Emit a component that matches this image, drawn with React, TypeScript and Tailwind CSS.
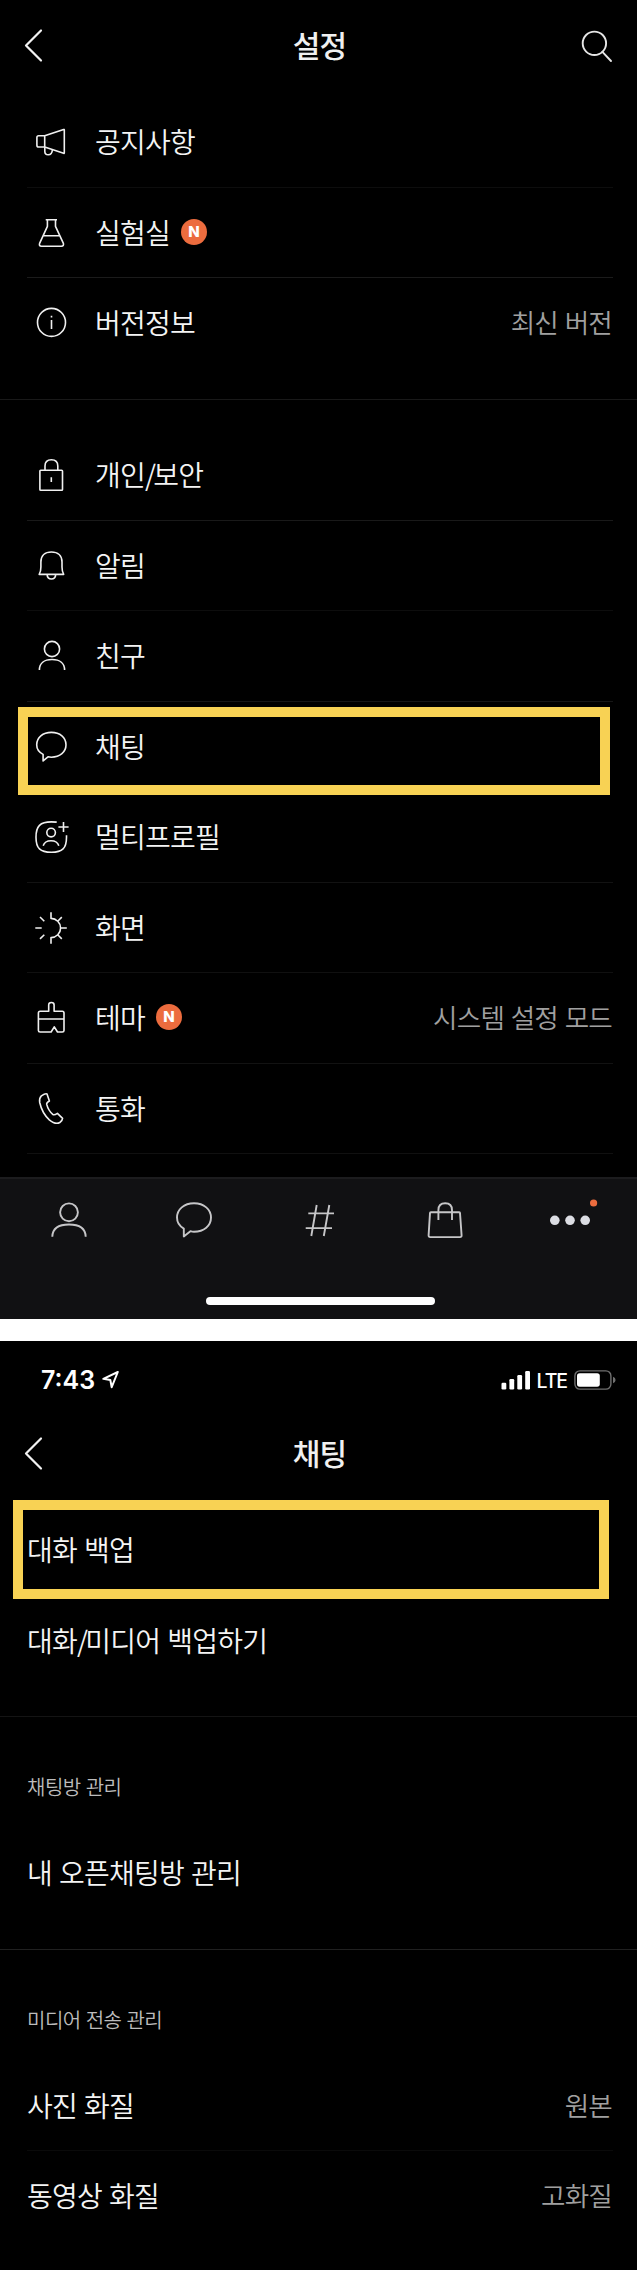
import { Fragment, type ReactNode } from "react";

function Icon({ children }: { children: ReactNode }) {
  return (
    <svg
      className="h-9 w-9 shrink-0"
      viewBox="0 0 36 36"
      fill="none"
      stroke="#f0f0f0"
      strokeWidth="1.6"
      strokeLinejoin="round"
    >
      {children}
    </svg>
  );
}

const icons = {
  notice: (
    <Icon>
      <path d="M11.7 11.8H5.6Q3.9 11.8 3.9 13.6V21.2Q3.9 23 5.6 23H11.7ZM11.7 11.8 30.6 5.5Q31.3 5.3 31.3 6V28.8Q31.3 29.6 30.6 29.3L11.7 23" />
      <path d="M11.8 23V27.2C11.8 29.6 13 30.8 15.2 30.8C17.8 30.8 19.2 29.2 19.4 25.8" />
    </Icon>
  ),
  lab: (
    <Icon>
      <path d="M12.7 4.8H24M14.4 4.8V11.3L6.6 28.4Q5.8 31.2 8.4 31.2H28.4Q31 31.2 30.4 28.4L22.5 11.3V4.8M10.3 20.7H26.8" />
    </Icon>
  ),
  info: (
    <Icon>
      <circle cx="18.5" cy="17.4" r="14" />
      <path d="M18.5 15V24M18.5 10.8V12.6" />
    </Icon>
  ),
  lock: (
    <Icon>
      <rect x="6.9" y="13.2" width="22.6" height="20" rx="0.8" />
      <path d="M12 13V9C12 4.8 14.5 2.7 18.4 2.7C22.3 2.7 24.8 4.8 24.8 9V13M18.3 20.3V25" />
    </Icon>
  ),
  bell: (
    <Icon>
      <path d="M6.2 26.4C7.4 24.5 7.9 22 7.9 19V14C7.9 7.6 12 4 18.4 4C24.8 4 29 7.6 29 14V19C29 22 29.5 24.5 30.7 26.4ZM14.1 26.6C14.3 29.6 15.9 31 18.4 31C20.9 31 22.5 29.6 22.7 26.6" />
    </Icon>
  ),
  friend: (
    <Icon>
      <circle cx="19" cy="11" r="7.6" />
      <path d="M6.4 32C6.4 25.4 11 21.5 19 21.5C27 21.5 31.6 25.4 31.6 32" />
    </Icon>
  ),
  chat: (
    <Icon>
      <path d="M18.4 3.4C27 3.4 33 8.6 33 15.8C33 23 27 28.2 18.4 28.2Q16.6 28.2 15 27.8L10.1 31.9V25.4C5.9 23.3 3.7 20 3.7 15.8C3.7 8.6 9.8 3.4 18.4 3.4Z" />
    </Icon>
  ),
  multi: (
    <Icon>
      <path d="M23.7 3.1Q21.6 2.9 18.3 2.9C7.2 2.9 3 7 3 18.2C3 29.3 7.2 33.3 18.3 33.3C29.4 33.3 33.5 29.3 33.5 18.2V16.2M30.5 2.9V13.1M25.4 8H35.6" />
      <circle cx="18.1" cy="13.6" r="4.3" />
      <path d="M10.2 26.8C11.2 23.4 14 21.8 18 21.8C22 21.8 24.8 23.4 25.8 26.8" />
    </Icon>
  ),
  screen: (
    <Icon>
      <path d="M18 2.3V8.4A9.6 9.6 0 0 1 18 27.6V33.7M27.6 18H33.8M2.3 18H8.7M7 7 11.3 11.2M7 28.9 11.3 24.7M28.8 7.1 24.7 11.2M28.8 28.9 24.7 24.8" />
    </Icon>
  ),
  theme: (
    <Icon>
      <path d="M15.7 11.2V5C15.7 1.7 21.1 1.7 21.1 5V11.2H29.3Q31 11.2 31 12.9V30.4Q31 32 29.3 32H24.5L21.3 26.8L18.1 32H7.1Q5.4 32 5.4 30.4V12.9Q5.4 11.2 7.1 11.2ZM5.4 19H31" />
    </Icon>
  ),
  call: (
    <Icon>
      <path d="M8.4 4.8Q12.4 2 14 2.9L16.4 10Q13.4 11.6 13.7 13.4Q15.4 19.8 20 23.6Q21.4 24.4 24.4 22.3L29.6 27.3Q29.5 29.6 26.8 31.5Q22.5 34 16.3 28.8Q9.1 22.2 6.7 11.5Q6 7.5 8.4 4.8Z" />
    </Icon>
  ),
};

type RowProps = {
  label: string;
  icon?: ReactNode;
  value?: string;
  isNew?: boolean;
  height?: string;
  line?: string;
  mark?: string;
};

// Slashes inside a label are set tighter than the syllables around them.
function Label({ text }: { text: string }) {
  return (
    <span className="mb-0.5 text-[28px] leading-9 font-[350] tracking-[-0.75px] [word-spacing:1.5px] whitespace-nowrap text-[#f4f4f4]">
      {text.split("/").map((part, i) => (
        <Fragment key={part}>
          {i > 0 && <span className="tracking-[-2.8px]">/</span>}
          {part}
        </Fragment>
      ))}
    </span>
  );
}

function Row({
  label,
  icon,
  value,
  isNew,
  height = "h-[90px]",
  line = "bg-[#0d0d0d]",
  mark,
}: RowProps) {
  return (
    <li className={`relative flex flex-col justify-between ${height}`}>
      <div className="flex h-[89px] shrink-0 items-center pr-[25px] pl-[27px]">
        {icon && <span className="mt-px mr-[26px] ml-[6px] shrink-0">{icon}</span>}
        <Label text={label} />
        {isNew && (
          <span className="mb-px ml-[11px] flex h-[26px] w-[26px] items-center justify-center rounded-full bg-[#ec6c3e] pt-px font-[Inter] text-[15px] font-extrabold text-white">
            N
          </span>
        )}
        {value && (
          <span className="mb-0.5 ml-auto text-[26.6px] leading-9 font-[350] tracking-[-0.8px] [word-spacing:1.5px] whitespace-nowrap text-[#a0a0a0]">
            {value}
          </span>
        )}
      </div>
      <div className={`mr-6 ml-[27px] h-px ${line}`} />
      {mark && <div className={`absolute border-10 border-[#f8d254] ${mark}`} />}
    </li>
  );
}

function Header({ title, search }: { title: string; search?: boolean }) {
  return (
    <header className="flex h-[90px] items-center justify-between pr-[20px] pl-[22px]">
      <svg className="h-10 w-10" viewBox="0 0 40 40" fill="none" stroke="#f2f2f2" strokeWidth="2.2">
        <path d="M19 5.5 4 20.5 19 35.5" strokeLinecap="round" strokeLinejoin="round" />
      </svg>
      <h1 className="mb-0.5 text-[30px] leading-10 font-medium tracking-[-0.9px] text-[#f0f0f0]">{title}</h1>
      <svg className="h-10 w-10" viewBox="0 0 40 40" fill="none" stroke="#e6e6e6" strokeWidth="1.9">
        {search && (
          <>
            <circle cx="17.4" cy="18.3" r="11.7" />
            <path d="M25.4 26.8 34 36" strokeLinecap="round" />
          </>
        )}
      </svg>
    </header>
  );
}

function TabIcon({ children }: { children: ReactNode }) {
  return (
    <div className="flex flex-1 justify-center">
      <svg
        className="h-11 w-11 overflow-visible"
        viewBox="0 0 44 44"
        fill="none"
        stroke="#c6c6c8"
        strokeWidth="1.9"
        strokeLinejoin="round"
      >
        {children}
      </svg>
    </div>
  );
}

function TabBar() {
  return (
    <nav className="mt-[23px] h-[142px] border-t-2 border-[#1c1c1e] bg-[#111113] pt-[19px]">
      <div className="flex pr-1 pl-[6.5px]">
        <TabIcon>
          <circle cx="22" cy="14.3" r="8.9" />
          <path d="M5.3 38.7C5.6 30.6 12 26.5 22 26.5C32 26.5 38.4 30.6 38.7 38.7" />
        </TabIcon>
        <TabIcon>
          <path d="M22 5.3C32 5.3 39 11.4 39 19.6C39 27.8 32 33.8 22 33.8Q20.2 33.8 18.4 33.2L11.8 38.4V30.6C7.4 28.2 5 24.4 5 19.6C5 11.4 12 5.3 22 5.3Z" />
        </TabIcon>
        <TabIcon>
          <path d="M18.7 7 13.3 38M31.3 7 25.8 38M10.3 15.4H36M7.7 30.1H34" />
        </TabIcon>
        <TabIcon>
          <path d="M7.9 14.2H36.2Q37 14.2 37 15L38.6 37.4Q38.7 39.1 37 39.1H7.2Q5.5 39.1 5.6 37.4L7 15Q7 14.2 7.9 14.2ZM15.4 22V12.2C15.4 7.6 18 5.3 22.2 5.3C26.4 5.3 29 7.6 29 12.2V22" />
        </TabIcon>
        <TabIcon>
          <g stroke="none" fill="#dcdde3">
            <circle cx="6.8" cy="22.3" r="4.8" />
            <circle cx="22" cy="22.3" r="4.8" />
            <circle cx="37.2" cy="22.3" r="4.8" />
            <circle cx="45.6" cy="5" r="3.6" fill="#ec6c3e" />
          </g>
        </TabIcon>
      </div>
      <div className="mt-[55px] ml-[206px] h-2 w-[229px] rounded-full bg-white" />
    </nav>
  );
}

function StatusBar() {
  return (
    <div className="flex h-[67px] items-center pt-[11px] pr-[21px] pl-[41px] text-white">
      <span className="w-[55px] font-[Inter] text-[25px] leading-8 font-semibold whitespace-nowrap">7:43</span>
      <svg className="ml-[5px] h-5 w-5" viewBox="0 0 20 20" fill="none" stroke="#fff" strokeWidth="2">
        <path d="M16.8 2 2.3 8.8 9.3 9.9 10.7 17.2Z" strokeLinejoin="round" />
      </svg>
      <svg className="ml-auto h-5 w-[30px]" viewBox="0 0 30 20" fill="#fff">
        <rect x="0.5" y="12.8" width="4.8" height="6.6" rx="1.2" />
        <rect x="8.4" y="9" width="4.8" height="10.4" rx="1.2" />
        <rect x="16.3" y="5" width="4.8" height="14.4" rx="1.2" />
        <rect x="24.2" y="1" width="4.8" height="18.4" rx="1.2" />
      </svg>
      <span className="mt-px ml-[6px] font-[Inter] text-[19.5px] leading-6 font-medium tracking-[-1.1px]">LTE</span>
      <svg className="ml-[7px] h-5 w-[42px]" viewBox="0 0 42 20" fill="none">
        <rect x="0.9" y="0.9" width="36" height="18.2" rx="5" stroke="#6f6f6f" strokeWidth="1.4" />
        <rect x="3" y="3.3" width="22.8" height="13.4" rx="2.6" fill="#fff" />
        <path d="M39 6.8Q41.6 7.8 41.6 10T39 13.2Z" fill="#6f6f6f" />
      </svg>
    </div>
  );
}

function SectionTitle({ children }: { children: ReactNode }) {
  return (
    <h2 className="mt-[56px] h-[29px] pl-[27px] text-[20px] leading-[28px] font-[350] tracking-[-0.5px] [word-spacing:1px] text-[#bcbcbc]">
      {children}
    </h2>
  );
}

export default function App() {
  return (
    <main className="h-[2270px] w-[637px] overflow-hidden bg-white font-['Noto_Sans_CJK_KR',sans-serif]">
      <section className="h-[1319px] bg-black">
        <Header title="설정" search />
        <ul className="mt-[7px]">
          <Row label="공지사항" icon={icons.notice} height="h-[91px]" />
          <Row label="실험실" icon={icons.lab} isNew line="bg-[#1b1b1b]" />
          <Row label="버전정보" icon={icons.info} value="최신 버전" line="bg-black" />
        </ul>
        <div className="mt-[31px] h-px bg-[#191919]" />
        <ul className="mt-[30px]">
          <Row label="개인/보안" icon={icons.lock} height="h-[91px]" line="bg-[#191919]" />
          <Row label="알림" icon={icons.bell} />
          <Row label="친구" icon={icons.friend} height="h-[91px]" line="bg-[#161616]" />
          <Row
            label="채팅"
            icon={icons.chat}
            line="bg-black"
            mark="top-[5px] left-[18px] h-[88px] w-[592px]"
          />
          <Row label="멀티프로필" icon={icons.multi} height="h-[91px]" line="bg-[#121212]" />
          <Row label="화면" icon={icons.screen} line="bg-[#101010]" />
          <Row label="테마" icon={icons.theme} isNew value="시스템 설정 모드" height="h-[91px]" line="bg-[#121212]" />
          <Row label="통화" icon={icons.call} line="bg-[#101010]" />
        </ul>
        <TabBar />
      </section>

      <section className="mt-[22px] h-[929px] bg-black">
        <StatusBar />
        <Header title="채팅" />
        <ul className="mt-[7px]">
          <Row
            label="대화 백업"
            height="h-[91px]"
            line="bg-black"
            mark="-top-[5px] left-[13px] h-[99px] w-[596px]"
          />
          <Row label="대화/미디어 백업하기" line="bg-black" />
        </ul>
        <div className="mt-[30px] h-px bg-[#141414]" />
        <SectionTitle>채팅방 관리</SectionTitle>
        <ul className="mt-[26px]">
          <Row label="내 오픈채팅방 관리" height="h-[91px]" line="bg-black" />
        </ul>
        <div className="mt-[30px] h-px bg-[#202020]" />
        <SectionTitle>미디어 전송 관리</SectionTitle>
        <ul className="mt-[26px]">
          <Row label="사진 화질" value="원본" line="bg-[#0a0a0a]" />
          <Row label="동영상 화질" value="고화질" line="bg-black" />
        </ul>
      </section>
    </main>
  );
}
